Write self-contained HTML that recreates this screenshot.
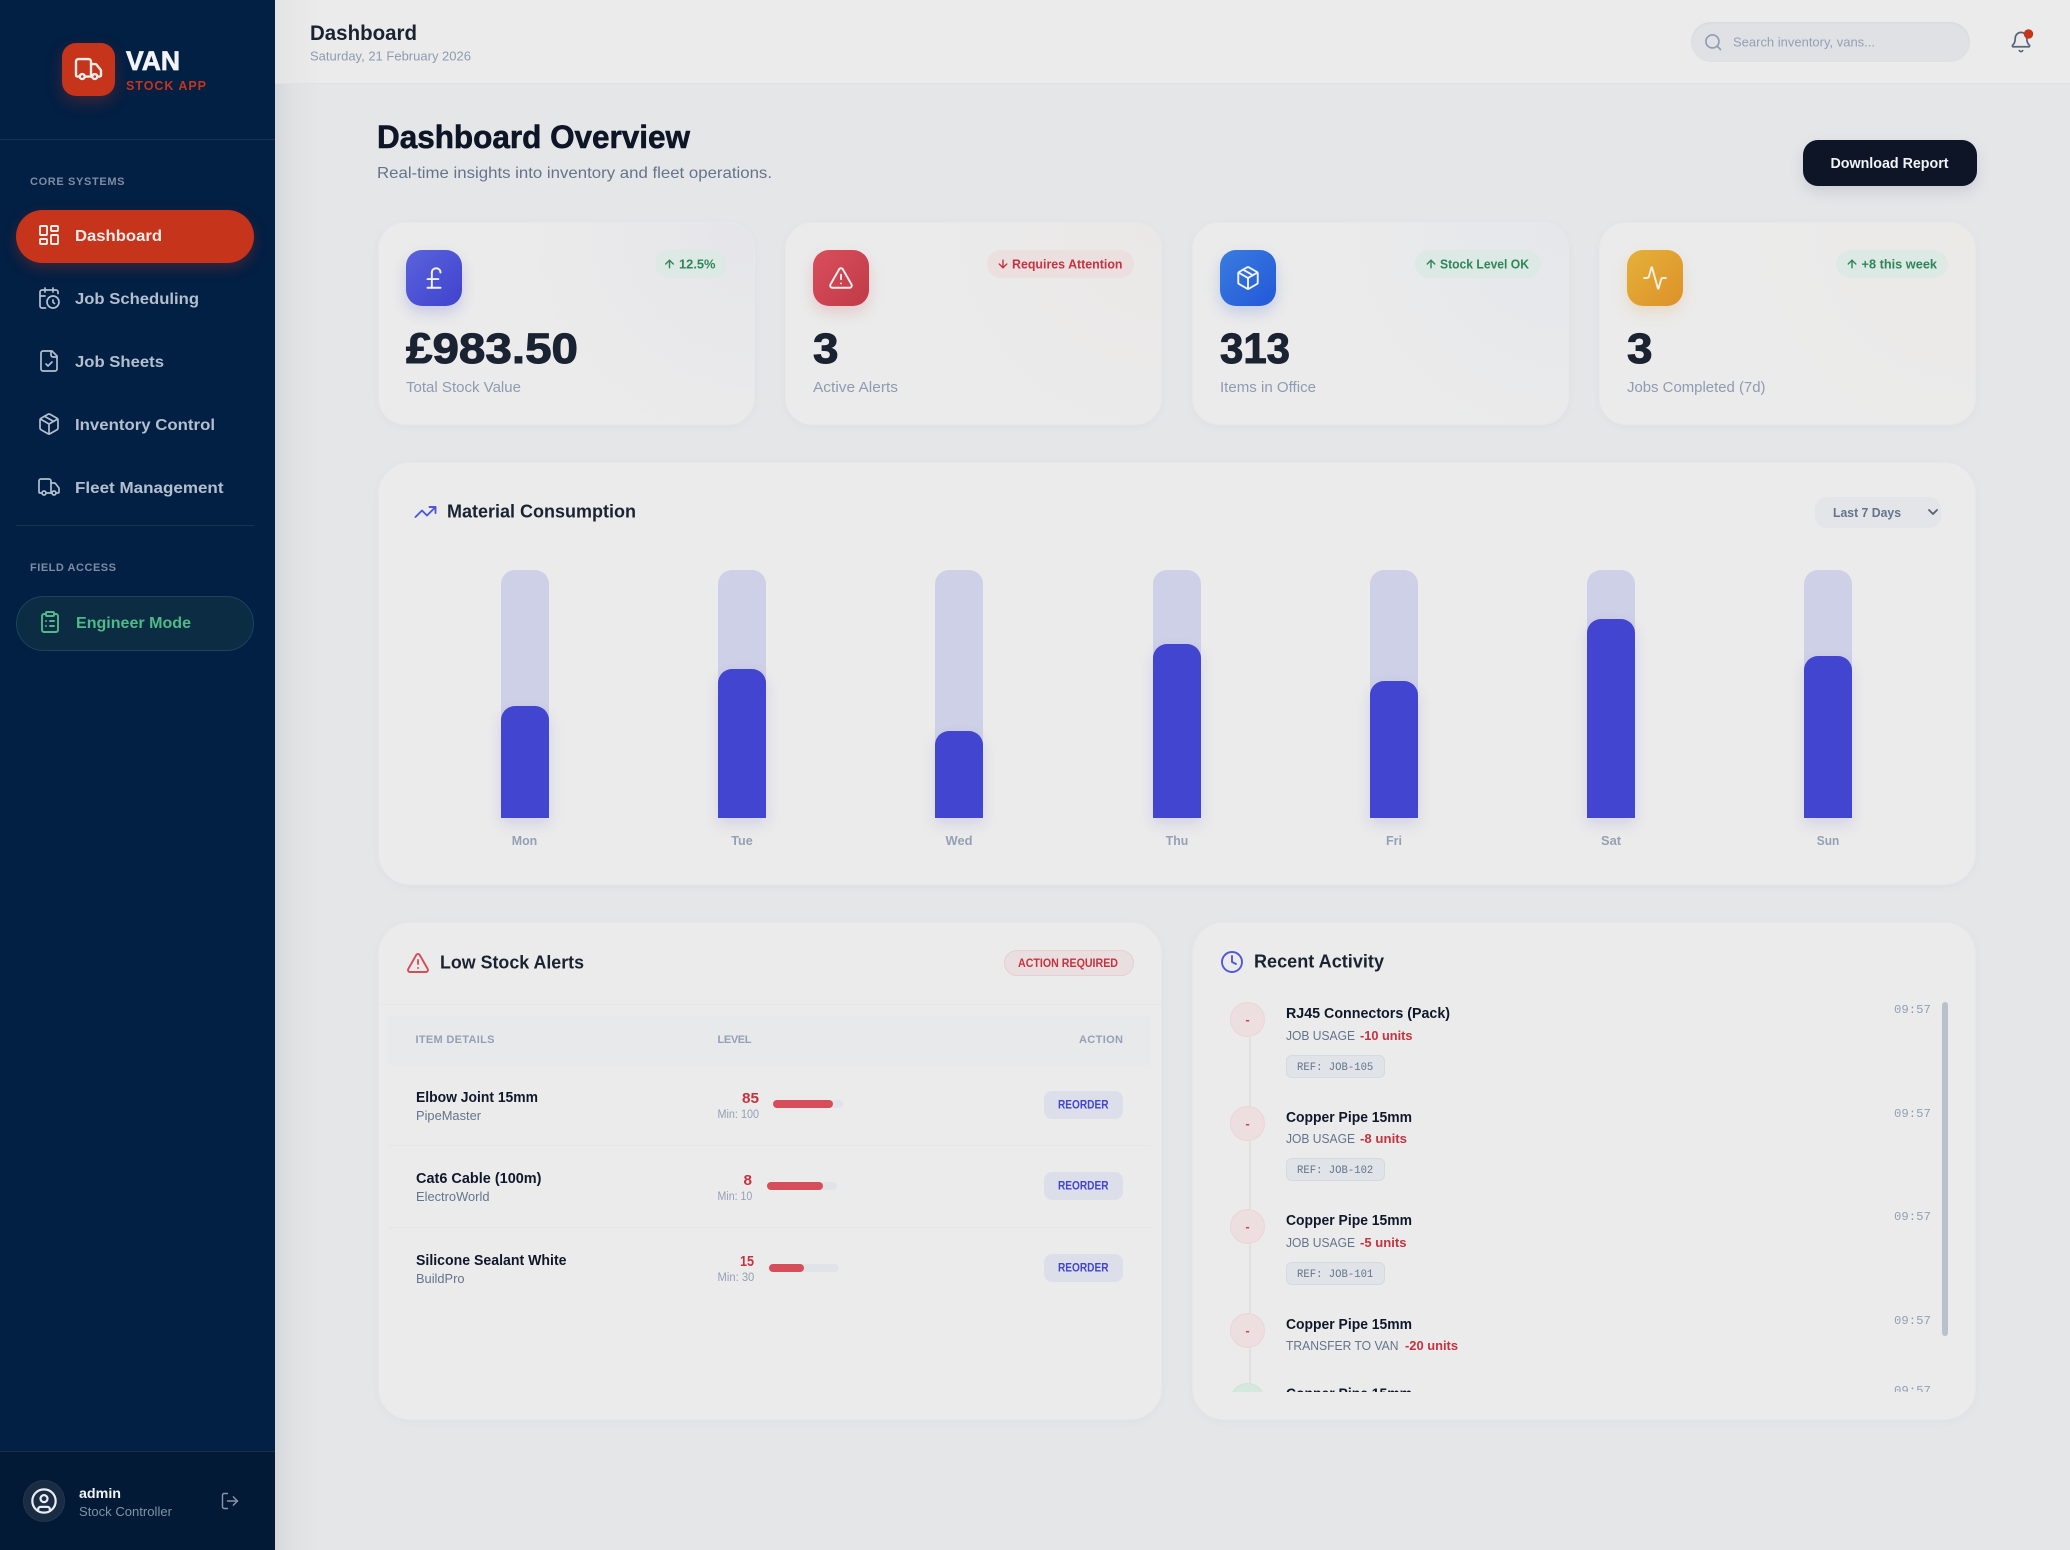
<!DOCTYPE html>
<html lang="en">
<head>
<meta charset="utf-8">
<title>Van Stock App – Dashboard</title>
<style>
*{box-sizing:border-box;margin:0;padding:0}
html,body{width:2070px;height:1550px;overflow:hidden;background:#e5e6e8;font-family:"Liberation Sans",sans-serif}
.b{position:absolute}
.card{background:#ebebeb;box-shadow:0 2px 8px rgba(120,130,150,.06);border:1px solid #e8e8ea}
.stat{top:222px;width:377px;height:203px;border-radius:27px}
.big{border-radius:32px}
.ico{top:250px;width:56px;height:56px;border-radius:16px}
.badge{top:250px;height:28px;border-radius:14px;background:#dde9e4}
.trk{top:570px;width:48px;height:248px;border-radius:14px 14px 0 0;background:#ced0e7}
.fill{width:48px;border-radius:14px 14px 0 0;background:#4145cf;box-shadow:0 6px 14px rgba(65,69,207,.15)}
.pb{width:70px;height:7.5px;border-radius:4px;background:#e0e3e7}
.pf{height:7.5px;border-radius:4px;background:#d54e5a;left:0;top:0}
.btn{left:1044px;width:79px;height:28px;border-radius:8px;background:#dcdfea}
.row{left:388px;width:763px;height:1px;background:#e6e6e8}
.dot{left:1230px;width:35px;height:35px;border-radius:50%;background:#eddedf;border:1.5px solid #ecd5d6}
.ref{left:1286px;width:99px;height:23px;border-radius:6px;background:#e0e3e7;border:1px solid #d5dae0}
svg.o{position:absolute;left:0;top:0}
text{font-family:"Liberation Sans",sans-serif}
.i{fill:none;stroke-linecap:round;stroke-linejoin:round}
</style>
</head>
<body>
<!-- main -->
<div class="b" style="left:275px;top:0;width:45px;height:1550px;background:linear-gradient(90deg,#d6d7da,#e0e1e3 40%,#e5e6e8)"></div>
<div class="b" style="left:275px;top:0;width:1795px;height:84px;background:linear-gradient(90deg,#e4e4e5,#ebebeb 2.5%);border-bottom:1.5px solid #e0e1e5"></div>
<div class="b" style="left:1690.5px;top:21.5px;width:279px;height:40px;border-radius:20px;background:#dfe1e5;box-shadow:inset 0 1px 2px rgba(120,130,150,.1)"></div>
<div class="b" style="left:1803px;top:140px;width:174px;height:46px;border-radius:15px;background:#0d1526;box-shadow:0 6px 14px rgba(100,116,139,.2)"></div>

<!-- sidebar -->
<div class="b" style="left:0;top:0;width:275px;height:1550px;background:#021f44"></div>
<div class="b" style="left:0;top:139px;width:275px;height:1px;background:#16324f"></div>
<div class="b" style="left:62px;top:43px;width:53px;height:53px;border-radius:14px;background:#c5341b;box-shadow:0 6px 16px rgba(197,52,27,.3)"></div>
<div class="b" style="left:16px;top:210px;width:238px;height:52.5px;border-radius:27px;background:#c5341b;box-shadow:0 5px 14px rgba(197,52,27,.3)"></div>
<div class="b" style="left:16px;top:525px;width:238px;height:1px;background:#16324f"></div>
<div class="b" style="left:16px;top:596px;width:238px;height:54.5px;border-radius:28px;background:#0c2c44;border:1px solid #15465a"></div>
<div class="b" style="left:0;top:1451px;width:275px;height:99px;background:#021a36;border-top:1px solid #1b3048"></div>
<div class="b" style="left:23px;top:1480px;width:42px;height:42px;border-radius:50%;background:#1a2c44;border:1px solid #24364e"></div>

<!-- stat cards -->
<div class="b card stat" style="left:378px;background:radial-gradient(circle at 100% 0,rgba(75,80,210,.035),rgba(75,80,210,0) 55%),#ebebeb"></div>
<div class="b card stat" style="left:785px;background:radial-gradient(circle at 100% 0,rgba(215,80,60,.022),rgba(215,80,60,0) 55%),#ebebeb"></div>
<div class="b card stat" style="left:1192px;background:radial-gradient(circle at 100% 0,rgba(50,110,220,.035),rgba(50,110,220,0) 55%),#ebebeb"></div>
<div class="b card stat" style="left:1599px;background:radial-gradient(circle at 100% 0,rgba(220,170,50,.025),rgba(220,170,50,0) 55%),#ebebeb"></div>
<div class="b ico" style="left:406px;background:linear-gradient(135deg,#5a63dc,#3f43cd);box-shadow:0 7px 14px rgba(65,69,207,.2)"></div>
<div class="b ico" style="left:813px;background:linear-gradient(135deg,#d94f5c,#c03a47);box-shadow:0 7px 14px rgba(200,60,70,.18)"></div>
<div class="b ico" style="left:1220px;background:linear-gradient(135deg,#3a7ce0,#2258d8);box-shadow:0 7px 14px rgba(40,90,216,.2)"></div>
<div class="b ico" style="left:1627px;background:linear-gradient(135deg,#e5b138,#dd912a);box-shadow:0 7px 14px rgba(221,150,42,.18)"></div>
<div class="b badge" style="left:654.5px;width:72px"></div>
<div class="b badge" style="left:987px;width:146.5px;background:#ebdfdf"></div>
<div class="b badge" style="left:1415px;width:126px"></div>
<div class="b badge" style="left:1836px;width:112px"></div>

<!-- chart card -->
<div class="b card big" style="left:378px;top:462px;width:1598px;height:423px"></div>
<div class="b" style="left:1815px;top:497px;width:126px;height:31px;border-radius:12px;background:#e4e5e8"></div>
<div class="b trk" style="left:501px"></div><div class="b fill" style="left:501px;top:706px;height:112px"></div>
<div class="b trk" style="left:718px"></div><div class="b fill" style="left:718px;top:669px;height:149px"></div>
<div class="b trk" style="left:935px"></div><div class="b fill" style="left:935px;top:731px;height:87px"></div>
<div class="b trk" style="left:1153px"></div><div class="b fill" style="left:1153px;top:644px;height:174px"></div>
<div class="b trk" style="left:1370px"></div><div class="b fill" style="left:1370px;top:681px;height:137px"></div>
<div class="b trk" style="left:1587px"></div><div class="b fill" style="left:1587px;top:619px;height:199px"></div>
<div class="b trk" style="left:1804px"></div><div class="b fill" style="left:1804px;top:656px;height:162px"></div>

<!-- alerts card -->
<div class="b card big" style="left:378px;top:922px;width:784px;height:498px"></div>
<div class="b" style="left:1004px;top:950px;width:130px;height:26px;border-radius:13px;background:#eadfe0;border:1px solid #e5d0d2"></div>
<div class="b" style="left:378px;top:1004px;width:784px;height:1px;background:#e7e7e9"></div>
<div class="b" style="left:388px;top:1016px;width:763px;height:49px;background:#e8e9eb"></div>
<div class="b row" style="top:1145px"></div>
<div class="b row" style="top:1227px"></div>
<div class="b pb" style="left:773px;top:1100px"><div class="b pf" style="width:60px"></div></div>
<div class="b pb" style="left:767px;top:1182px"><div class="b pf" style="width:55.5px"></div></div>
<div class="b pb" style="left:769px;top:1264px"><div class="b pf" style="width:35px"></div></div>
<div class="b btn" style="top:1091px"></div>
<div class="b btn" style="top:1172px"></div>
<div class="b btn" style="top:1254px"></div>

<!-- activity card -->
<div class="b card big" style="left:1192px;top:922px;width:784px;height:498px"></div>
<div class="b" style="left:1192px;top:995px;width:760px;height:397px;overflow:hidden">
  <div class="b" style="left:56.5px;top:42px;width:2px;height:355px;background:#dfe0e3"></div>
  <div class="b dot" style="left:38px;top:7px"></div>
  <div class="b dot" style="left:38px;top:111px"></div>
  <div class="b dot" style="left:38px;top:214px"></div>
  <div class="b dot" style="left:38px;top:318px"></div>
  <div class="b dot" style="left:38px;top:388px;background:#d4e8de;border-color:#cbe4d6"></div>
</div>
<div class="b ref" style="top:1055px"></div>
<div class="b ref" style="top:1158px"></div>
<div class="b ref" style="top:1262px"></div>
<div class="b" style="left:1942px;top:1002px;width:6px;height:334px;border-radius:3px;background:#b9c1cb"></div>

<svg class="o" width="2070" height="1550" viewBox="0 0 2070 1550" xmlns="http://www.w3.org/2000/svg">
<defs><clipPath id="cl"><rect x="1192" y="995" width="760" height="397"/></clipPath></defs>

<!-- sidebar icons -->
<svg x="73.5" y="54" width="30" height="30" viewBox="0 0 24 24" class="i" stroke="#f3ede9" stroke-width="1.9"><path d="M14 18V6a2 2 0 0 0-2-2H4a2 2 0 0 0-2 2v11a1 1 0 0 0 1 1h2"/><path d="M15 18H9"/><path d="M19 18h2a1 1 0 0 0 1-1v-3.65a1 1 0 0 0-.22-.624l-3.48-4.35A1 1 0 0 0 17.52 8H14"/><circle cx="17" cy="18" r="2"/><circle cx="7" cy="18" r="2"/></svg>
<svg x="37" y="223" width="24" height="24" viewBox="0 0 24 24" class="i" stroke="#f3ede9" stroke-width="1.9"><rect x="3" y="3" width="7" height="9" rx="1"/><rect x="14" y="3" width="7" height="5" rx="1"/><rect x="14" y="12" width="7" height="9" rx="1"/><rect x="3" y="16" width="7" height="5" rx="1"/></svg>
<svg x="37" y="286" width="24" height="24" viewBox="0 0 24 24" class="i" stroke="#b4bfce" stroke-width="1.7"><path d="M21 7.5V6a2 2 0 0 0-2-2H5a2 2 0 0 0-2 2v14a2 2 0 0 0 2 2h3.5"/><path d="M16 2v4"/><path d="M8 2v4"/><path d="M3 10h5"/><path d="M17.5 17.5 16 16.3V14"/><circle cx="16" cy="16" r="6"/></svg>
<svg x="37" y="349" width="24" height="24" viewBox="0 0 24 24" class="i" stroke="#b4bfce" stroke-width="1.7"><path d="M15 2H6a2 2 0 0 0-2 2v16a2 2 0 0 0 2 2h12a2 2 0 0 0 2-2V7Z"/><path d="M14 2v4a2 2 0 0 0 2 2h4"/><path d="m9 15 2 2 4-4"/></svg>
<svg x="37" y="412" width="24" height="24" viewBox="0 0 24 24" class="i" stroke="#b4bfce" stroke-width="1.7"><path d="m7.5 4.27 9 5.15"/><path d="M21 8a2 2 0 0 0-1-1.73l-7-4a2 2 0 0 0-2 0l-7 4A2 2 0 0 0 3 8v8a2 2 0 0 0 1 1.73l7 4a2 2 0 0 0 2 0l7-4A2 2 0 0 0 21 16Z"/><path d="m3.3 7 8.7 5 8.7-5"/><path d="M12 22V12"/></svg>
<svg x="37" y="475" width="24" height="24" viewBox="0 0 24 24" class="i" stroke="#b4bfce" stroke-width="1.7"><path d="M14 18V6a2 2 0 0 0-2-2H4a2 2 0 0 0-2 2v11a1 1 0 0 0 1 1h2"/><path d="M15 18H9"/><path d="M19 18h2a1 1 0 0 0 1-1v-3.65a1 1 0 0 0-.22-.624l-3.48-4.35A1 1 0 0 0 17.52 8H14"/><circle cx="17" cy="18" r="2"/><circle cx="7" cy="18" r="2"/></svg>
<svg x="38" y="610" width="24" height="24" viewBox="0 0 24 24" class="i" stroke="#4fba87" stroke-width="1.9"><rect width="8" height="4" x="8" y="2" rx="1" ry="1"/><path d="M16 4h2a2 2 0 0 1 2 2v14a2 2 0 0 1-2 2H6a2 2 0 0 1-2-2V6a2 2 0 0 1 2-2h2"/><path d="M12 11h4"/><path d="M12 16h4"/><path d="M8 11h.01"/><path d="M8 16h.01"/></svg>
<svg x="30" y="1487" width="28" height="28" viewBox="0 0 24 24" class="i" stroke="#e9edf2" stroke-width="1.9"><circle cx="12" cy="12" r="10"/><circle cx="12" cy="10" r="3"/><path d="M7 20.662V19a2 2 0 0 1 2-2h6a2 2 0 0 1 2 2v1.662"/></svg>
<svg x="220" y="1491" width="20" height="20" viewBox="0 0 24 24" class="i" stroke="#8796ab" stroke-width="1.7"><path d="M9 21H5a2 2 0 0 1-2-2V5a2 2 0 0 1 2-2h4"/><polyline points="16 17 21 12 16 7"/><line x1="21" x2="9" y1="12" y2="12"/></svg>

<!-- sidebar text -->
<text x="126" y="70" font-size="27" font-weight="700" fill="#f1f3f6" stroke="#f1f3f6" stroke-width=".7" textLength="54" lengthAdjust="spacingAndGlyphs">VAN</text>
<text x="126" y="90" font-size="12.5" font-weight="700" fill="#c5341b" textLength="80" lengthAdjust="spacing">STOCK APP</text>
<text x="30" y="185" font-size="11" font-weight="700" fill="#7e8ca3" textLength="94.5" lengthAdjust="spacing">CORE SYSTEMS</text>
<text x="75" y="241" font-size="16" font-weight="700" fill="#f4ece8" textLength="87" lengthAdjust="spacingAndGlyphs">Dashboard</text>
<text x="75" y="304" font-size="16" font-weight="700" fill="#b4bfce" textLength="124" lengthAdjust="spacingAndGlyphs">Job Scheduling</text>
<text x="75" y="367" font-size="16" font-weight="700" fill="#b4bfce" textLength="89" lengthAdjust="spacingAndGlyphs">Job Sheets</text>
<text x="75" y="430" font-size="16" font-weight="700" fill="#b4bfce" textLength="140" lengthAdjust="spacingAndGlyphs">Inventory Control</text>
<text x="75" y="493" font-size="16" font-weight="700" fill="#b4bfce" textLength="148.5" lengthAdjust="spacingAndGlyphs">Fleet Management</text>
<text x="30" y="571" font-size="11" font-weight="700" fill="#7e8ca3" textLength="86" lengthAdjust="spacing">FIELD ACCESS</text>
<text x="76" y="628" font-size="16" font-weight="700" fill="#4fba87" textLength="115" lengthAdjust="spacingAndGlyphs">Engineer Mode</text>
<text x="79" y="1498" font-size="14" font-weight="700" fill="#f1f5f9" textLength="42" lengthAdjust="spacingAndGlyphs">admin</text>
<text x="79" y="1516" font-size="12.5" fill="#8291a6" textLength="93" lengthAdjust="spacingAndGlyphs">Stock Controller</text>

<!-- topbar -->
<text x="310" y="40" font-size="21.3" font-weight="700" fill="#1a2332" textLength="107" lengthAdjust="spacingAndGlyphs">Dashboard</text>
<text x="310" y="60.5" font-size="13" fill="#8e9bb0" textLength="161" lengthAdjust="spacingAndGlyphs">Saturday, 21 February 2026</text>
<svg x="1703.5" y="32.5" width="19.5" height="19.5" viewBox="0 0 24 24" class="i" stroke="#8e9bb0" stroke-width="2"><circle cx="11" cy="11" r="8"/><path d="m21 21-4.3-4.3"/></svg>
<text x="1733" y="46.5" font-size="13" fill="#94a0b4" textLength="142" lengthAdjust="spacingAndGlyphs">Search inventory, vans...</text>
<svg x="2009.5" y="30.5" width="23" height="23" viewBox="0 0 24 24" class="i" stroke="#56647a" stroke-width="1.8"><path d="M10.268 21a2 2 0 0 0 3.464 0"/><path d="M3.262 15.326A1 1 0 0 0 4 17h16a1 1 0 0 0 .74-1.673C19.41 13.956 18 12.499 18 8A6 6 0 0 0 6 8c0 4.499-1.411 5.956-2.738 7.326"/></svg>
<circle cx="2028.5" cy="34" r="4.7" fill="#c5341b"/>

<!-- page head -->
<text x="377" y="148" font-size="32.5" font-weight="700" fill="#0d1526" stroke="#0d1526" stroke-width=".6" textLength="313" lengthAdjust="spacingAndGlyphs">Dashboard Overview</text>
<text x="377" y="178" font-size="16" fill="#64748b" textLength="395" lengthAdjust="spacingAndGlyphs">Real-time insights into inventory and fleet operations.</text>
<text x="1830.5" y="168" font-size="14.7" font-weight="700" fill="#f1f5f9" textLength="118" lengthAdjust="spacingAndGlyphs">Download Report</text>

<!-- stat icons -->
<svg x="421" y="265" width="26" height="26" viewBox="0 0 24 24" class="i" stroke="#f1f1f6" stroke-width="1.8"><path d="M18 7c0-5.333-8-5.333-8 0"/><path d="M10 7v14"/><path d="M6 21h12"/><path d="M6 13h10"/></svg>
<svg x="828" y="265" width="26" height="26" viewBox="0 0 24 24" class="i" stroke="#f6ecec" stroke-width="1.8"><path d="m21.73 18-8-14a2 2 0 0 0-3.48 0l-8 14A2 2 0 0 0 4 21h16a2 2 0 0 0 1.73-3"/><path d="M12 9v4"/><path d="M12 17h.01"/></svg>
<svg x="1235" y="265" width="26" height="26" viewBox="0 0 24 24" class="i" stroke="#eef2fb" stroke-width="1.8"><path d="m7.5 4.27 9 5.15"/><path d="M21 8a2 2 0 0 0-1-1.73l-7-4a2 2 0 0 0-2 0l-7 4A2 2 0 0 0 3 8v8a2 2 0 0 0 1 1.73l7 4a2 2 0 0 0 2 0l7-4A2 2 0 0 0 21 16Z"/><path d="m3.3 7 8.7 5 8.7-5"/><path d="M12 22V12"/></svg>
<svg x="1642" y="265" width="26" height="26" viewBox="0 0 24 24" class="i" stroke="#f6efe2" stroke-width="1.8"><path d="M22 12h-2.48a2 2 0 0 0-1.93 1.46l-2.35 8.36a.25.25 0 0 1-.48 0L9.24 2.18a.25.25 0 0 0-.48 0l-2.35 8.36A2 2 0 0 1 4.49 12H2"/></svg>

<!-- badge arrows -->
<svg x="663" y="257.5" width="13" height="13" viewBox="0 0 24 24" class="i" stroke="#2f855a" stroke-width="2.6"><path d="m5 12 7-7 7 7"/><path d="M12 19V5"/></svg>
<svg x="996.5" y="257.5" width="13" height="13" viewBox="0 0 24 24" class="i" stroke="#c53340" stroke-width="2.6"><path d="M12 5v14"/><path d="m19 12-7 7-7-7"/></svg>
<svg x="1424.5" y="257.5" width="13" height="13" viewBox="0 0 24 24" class="i" stroke="#2f855a" stroke-width="2.6"><path d="m5 12 7-7 7 7"/><path d="M12 19V5"/></svg>
<svg x="1845.5" y="257.5" width="13" height="13" viewBox="0 0 24 24" class="i" stroke="#2f855a" stroke-width="2.6"><path d="m5 12 7-7 7 7"/><path d="M12 19V5"/></svg>
<g font-size="12.5" font-weight="700">
<text x="679" y="268.5" fill="#2f855a" textLength="36.5" lengthAdjust="spacingAndGlyphs">12.5%</text>
<text x="1012" y="268.5" fill="#c53340" textLength="110.5" lengthAdjust="spacingAndGlyphs">Requires Attention</text>
<text x="1440" y="268.5" fill="#2f855a" textLength="89" lengthAdjust="spacingAndGlyphs">Stock Level OK</text>
<text x="1861.5" y="268.5" fill="#2f855a" textLength="75.5" lengthAdjust="spacingAndGlyphs">+8 this week</text>
</g>
<g font-size="43" font-weight="700" fill="#1a2332" stroke="#1a2332" stroke-width="1">
<text x="406" y="363" textLength="172" lengthAdjust="spacingAndGlyphs">£983.50</text>
<text x="813" y="363" textLength="25.5" lengthAdjust="spacingAndGlyphs">3</text>
<text x="1220" y="363" textLength="70" lengthAdjust="spacingAndGlyphs">313</text>
<text x="1627" y="363" textLength="25.5" lengthAdjust="spacingAndGlyphs">3</text>
</g>
<g font-size="14.5" fill="#8e9bb0">
<text x="406" y="392" textLength="115" lengthAdjust="spacingAndGlyphs">Total Stock Value</text>
<text x="813" y="392" textLength="85" lengthAdjust="spacingAndGlyphs">Active Alerts</text>
<text x="1220" y="392" textLength="96" lengthAdjust="spacingAndGlyphs">Items in Office</text>
<text x="1627" y="392" textLength="138.5" lengthAdjust="spacingAndGlyphs">Jobs Completed (7d)</text>
</g>

<!-- chart -->
<svg x="413.5" y="500" width="24" height="24" viewBox="0 0 24 24" class="i" stroke="#5058d8" stroke-width="1.9"><polyline points="22 7 13.5 15.5 8.5 10.5 2 17"/><polyline points="16 7 22 7 22 13"/></svg>
<text x="447" y="517.5" font-size="18.5" font-weight="700" fill="#1a2332" textLength="189" lengthAdjust="spacingAndGlyphs">Material Consumption</text>
<text x="1833" y="517" font-size="13" font-weight="700" fill="#64748b" textLength="68" lengthAdjust="spacingAndGlyphs">Last 7 Days</text>
<svg x="1925" y="504" width="16" height="16" viewBox="0 0 24 24" class="i" stroke="#56647a" stroke-width="2.8"><path d="m6 9 6 6 6-6"/></svg>
<g font-size="13" font-weight="700" fill="#94a0b4" text-anchor="middle">
<text x="524.5" y="845" textLength="25.5" lengthAdjust="spacingAndGlyphs">Mon</text>
<text x="742" y="845" textLength="21.5" lengthAdjust="spacingAndGlyphs">Tue</text>
<text x="959" y="845" textLength="27" lengthAdjust="spacingAndGlyphs">Wed</text>
<text x="1177" y="845" textLength="22.5" lengthAdjust="spacingAndGlyphs">Thu</text>
<text x="1394" y="845" textLength="16" lengthAdjust="spacingAndGlyphs">Fri</text>
<text x="1611" y="845" textLength="20" lengthAdjust="spacingAndGlyphs">Sat</text>
<text x="1828" y="845" textLength="22.5" lengthAdjust="spacingAndGlyphs">Sun</text>
</g>

<!-- alerts -->
<svg x="406" y="951" width="24" height="24" viewBox="0 0 24 24" class="i" stroke="#d54e5a" stroke-width="1.9"><path d="m21.73 18-8-14a2 2 0 0 0-3.48 0l-8 14A2 2 0 0 0 4 21h16a2 2 0 0 0 1.73-3"/><path d="M12 9v4"/><path d="M12 17h.01"/></svg>
<text x="440" y="968.5" font-size="18" font-weight="700" fill="#1a2332" textLength="144" lengthAdjust="spacingAndGlyphs">Low Stock Alerts</text>
<text x="1018" y="967" font-size="11.5" font-weight="700" fill="#c53340" textLength="100" lengthAdjust="spacingAndGlyphs">ACTION REQUIRED</text>
<g font-size="11" font-weight="700" fill="#94a0b4">
<text x="415.5" y="1043" textLength="79" lengthAdjust="spacing">ITEM DETAILS</text>
<text x="717.5" y="1043" textLength="34" lengthAdjust="spacing">LEVEL</text>
<text x="1079" y="1043" textLength="44" lengthAdjust="spacing">ACTION</text>
</g>
<g font-size="14.5" font-weight="700" fill="#0f172a">
<text x="416" y="1102" textLength="122" lengthAdjust="spacingAndGlyphs">Elbow Joint 15mm</text>
<text x="416" y="1183" textLength="125.5" lengthAdjust="spacingAndGlyphs">Cat6 Cable (100m)</text>
<text x="416" y="1265" textLength="150.5" lengthAdjust="spacingAndGlyphs">Silicone Sealant White</text>
</g>
<g font-size="13" fill="#64748b">
<text x="416" y="1120" textLength="65" lengthAdjust="spacingAndGlyphs">PipeMaster</text>
<text x="416" y="1201" textLength="73.5" lengthAdjust="spacingAndGlyphs">ElectroWorld</text>
<text x="416" y="1283" textLength="48.5" lengthAdjust="spacingAndGlyphs">BuildPro</text>
</g>
<g font-size="15" font-weight="700" fill="#c53340">
<text x="742" y="1103" textLength="17" lengthAdjust="spacingAndGlyphs">85</text>
<text x="743.5" y="1185" textLength="8.5" lengthAdjust="spacingAndGlyphs">8</text>
<text x="740" y="1266" textLength="14" lengthAdjust="spacingAndGlyphs">15</text>
</g>
<g font-size="11.5" fill="#94a0b4">
<text x="717.5" y="1118" textLength="41.5" lengthAdjust="spacingAndGlyphs">Min: 100</text>
<text x="717.5" y="1200" textLength="34.8" lengthAdjust="spacingAndGlyphs">Min: 10</text>
<text x="717.5" y="1281" textLength="36.8" lengthAdjust="spacingAndGlyphs">Min: 30</text>
</g>
<g font-size="11.5" font-weight="700" fill="#4145cf">
<text x="1058" y="1108.5" textLength="50.5" lengthAdjust="spacingAndGlyphs">REORDER</text>
<text x="1058" y="1189.5" textLength="50.5" lengthAdjust="spacingAndGlyphs">REORDER</text>
<text x="1058" y="1271.5" textLength="50.5" lengthAdjust="spacingAndGlyphs">REORDER</text>
</g>

<!-- activity -->
<svg x="1220" y="950" width="24" height="24" viewBox="0 0 24 24" class="i" stroke="#5058d8" stroke-width="1.9"><circle cx="12" cy="12" r="10"/><polyline points="12 6 12 12 16 14"/></svg>
<text x="1254" y="967.5" font-size="18" font-weight="700" fill="#1a2332" textLength="130" lengthAdjust="spacingAndGlyphs">Recent Activity</text>
<g clip-path="url(#cl)">
<g font-size="14.5" font-weight="700" fill="#0f172a">
<text x="1286" y="1018" textLength="164" lengthAdjust="spacingAndGlyphs">RJ45 Connectors (Pack)</text>
<text x="1286" y="1122" textLength="126" lengthAdjust="spacingAndGlyphs">Copper Pipe 15mm</text>
<text x="1286" y="1225" textLength="126" lengthAdjust="spacingAndGlyphs">Copper Pipe 15mm</text>
<text x="1286" y="1329" textLength="126" lengthAdjust="spacingAndGlyphs">Copper Pipe 15mm</text>
<text x="1286" y="1398.5" textLength="126" lengthAdjust="spacingAndGlyphs">Copper Pipe 15mm</text>
</g>
<g font-size="13" fill="#64748b">
<text x="1286" y="1040" textLength="69" lengthAdjust="spacingAndGlyphs">JOB USAGE</text>
<text x="1286" y="1143" textLength="69" lengthAdjust="spacingAndGlyphs">JOB USAGE</text>
<text x="1286" y="1247" textLength="69" lengthAdjust="spacingAndGlyphs">JOB USAGE</text>
<text x="1286" y="1350" textLength="112.5" lengthAdjust="spacingAndGlyphs">TRANSFER TO VAN</text>
</g>
<g font-size="13" font-weight="700" fill="#c53340">
<text x="1360" y="1040" textLength="52.5" lengthAdjust="spacingAndGlyphs">-10 units</text>
<text x="1360" y="1143" textLength="47" lengthAdjust="spacingAndGlyphs">-8 units</text>
<text x="1360" y="1247" textLength="46.5" lengthAdjust="spacingAndGlyphs">-5 units</text>
<text x="1405" y="1350" textLength="53" lengthAdjust="spacingAndGlyphs">-20 units</text>
</g>
<g font-size="12.3" fill="#94a0b4">
<text x="1894" y="1013" style="font-family:'Liberation Mono',monospace">09:57</text>
<text x="1894" y="1117" style="font-family:'Liberation Mono',monospace">09:57</text>
<text x="1894" y="1220" style="font-family:'Liberation Mono',monospace">09:57</text>
<text x="1894" y="1324" style="font-family:'Liberation Mono',monospace">09:57</text>
<text x="1894" y="1394" style="font-family:'Liberation Mono',monospace">09:57</text>
</g>
<g font-size="13" font-weight="700" fill="#d14552" text-anchor="middle">
<text x="1247.5" y="1024">-</text>
<text x="1247.5" y="1128">-</text>
<text x="1247.5" y="1231">-</text>
<text x="1247.5" y="1335">-</text>
</g>
</g>
<g font-size="10.6" fill="#64748b">
<text x="1297" y="1069.8" style="font-family:'Liberation Mono',monospace">REF: JOB-105</text>
<text x="1297" y="1172.8" style="font-family:'Liberation Mono',monospace">REF: JOB-102</text>
<text x="1297" y="1276.8" style="font-family:'Liberation Mono',monospace">REF: JOB-101</text>
</g>
</svg>
</body>
</html>
